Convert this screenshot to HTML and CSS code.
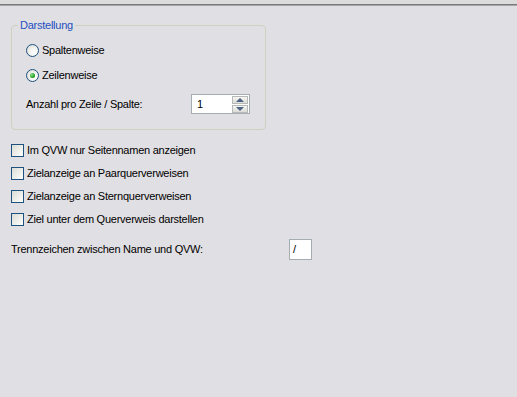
FILE: index.html
```html
<!DOCTYPE html>
<html lang="de">
<head>
  <meta charset="UTF-8">
  <title>Querverweise</title>
  <link rel="stylesheet" href="styles.css">
</head>
<body>
  <div class="topbar"></div>
  <fieldset class="group">
    <legend>Darstellung</legend>
    <div class="option">
      <span class="radio"></span>
      <span>Spaltenweise</span>
    </div>
    <div class="option">
      <span class="radio checked"></span>
      <span>Zeilenweise</span>
    </div>
    <div class="count-row">
      <span class="count-label">Anzahl pro Zeile / Spalte:</span>
      <div class="spin">
        <span class="spin-value">1</span>
        <div class="spin-buttons">
          <span class="spin-btn up"></span>
          <span class="spin-btn down"></span>
        </div>
      </div>
    </div>
  </fieldset>

  <div class="checks">
    <div class="option">
      <span class="check"></span>
      <span>Im QVW nur Seitennamen anzeigen</span>
    </div>
    <div class="option">
      <span class="check"></span>
      <span>Zielanzeige an Paarquerverweisen</span>
    </div>
    <div class="option">
      <span class="check"></span>
      <span>Zielanzeige an Sternquerverweisen</span>
    </div>
    <div class="option">
      <span class="check"></span>
      <span>Ziel unter dem Querverweis darstellen</span>
    </div>
  </div>

  <div class="sep-row">
    <span class="sep-label">Trennzeichen zwischen Name und QVW:</span>
    <span class="sep-input">/</span>
  </div>
</body>
</html>
```

FILE: styles.css
```css
* {
  margin: 0;
  padding: 0;
  box-sizing: border-box;
}
body {
  background-color: #e0dfe3;
  font-family: "Liberation Sans", Arial, sans-serif;
  font-size: 11px;
  letter-spacing: -0.25px;
  color: #000;
  line-height: 13px;
}
.topbar {
  height: 5px;
  background-color: #dcdcdc;
  border-bottom: 1px solid #7a7a7a;
  box-shadow: 0 1px 0 #a6a6a6;
}
.group {
  width: 255px;
  margin: 14px 0 0 11px;
  padding: 12px 14px 15px 14px;
  border: 1px solid #d0d0bf;
  border-radius: 4px;
  display: flex;
  flex-direction: column;
  gap: 12px;
}
.group legend {
  margin-left: -8px;
  padding: 0 2px;
  color: #1d4fc0;
  line-height: 13px;
}
.option {
  display: flex;
  align-items: center;
  height: 13px;
}
.radio {
  width: 13px;
  height: 13px;
  margin-right: 3px;
  border: 1px solid #1c5180;
  border-radius: 50%;
  background: radial-gradient(circle at 65% 65%, #fff 0, #f4f4f0 40%, #d6d6ce 100%);
  display: flex;
  align-items: center;
  justify-content: center;
}
.radio.checked::after {
  content: "";
  width: 5px;
  height: 5px;
  border-radius: 50%;
  background: radial-gradient(circle at 35% 35%, #8be08b 0, #21a121 60%, #187a18 100%);
}
.count-row {
  display: flex;
  align-items: center;
  height: 20px;
}
.count-label {
  width: 165px;
}
.spin {
  width: 59px;
  height: 20px;
  border: 1px solid #a5acb2;
  background-color: #fff;
  display: flex;
  align-items: center;
  justify-content: space-between;
  padding: 0 1px 0 5px;
}
.spin-buttons {
  display: flex;
  flex-direction: column;
  gap: 1px;
}
.spin-btn {
  width: 16px;
  height: 8px;
  border: 1px solid #b8b8b8;
  background: linear-gradient(#f6f6f3, #dcdcd6);
  display: flex;
  align-items: center;
  justify-content: center;
}
.spin-btn::after {
  content: "";
  border-left: 4px solid transparent;
  border-right: 4px solid transparent;
}
.spin-btn.up::after {
  border-bottom: 4px solid #4d6185;
}
.spin-btn.down::after {
  border-top: 4px solid #4d6185;
}
.checks {
  margin: 14px 0 0 11px;
  display: flex;
  flex-direction: column;
  gap: 10px;
}
.check {
  width: 13px;
  height: 13px;
  margin-right: 3px;
  border: 1px solid #1c5180;
  background: linear-gradient(135deg, #dcdcd7 0, #f0f0ec 60%, #fff 100%);
}
.sep-row {
  margin: 13px 0 0 11px;
  display: flex;
  align-items: center;
  height: 21px;
}
.sep-label {
  width: 278px;
}
.sep-input {
  width: 23px;
  height: 21px;
  border: 1px solid #a5acb2;
  background-color: #fff;
  padding-left: 3px;
  line-height: 19px;
}
```
